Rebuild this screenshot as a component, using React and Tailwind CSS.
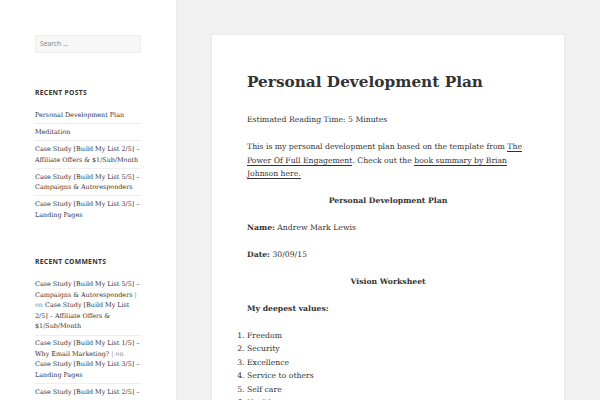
export default function App() {
  const serif = { fontFamily: '"DejaVu Serif", "Liberation Serif", serif' };
  const sans = { fontFamily: '"Noto Sans", "Open Sans", sans-serif' };

  const recentPosts = [
    "Personal Development Plan",
    "Meditation",
    "Case Study [Build My List 2/5] – Affiliate Offers & $1/Sub/Month",
    "Case Study [Build My List 5/5] – Campaigns & Autoresponders",
    "Case Study [Build My List 3/5] – Landing Pages",
  ];

  const comments = [
    {
      author: "Case Study [Build My List 5/5] – Campaigns & Autoresponders",
      post: "Case Study [Build My List 2/5] – Affiliate Offers & $1/Sub/Month",
    },
    {
      author: "Case Study [Build My List 1/5] – Why Email Marketing?",
      post: "Case Study [Build My List 3/5] – Landing Pages",
    },
    {
      author: "Case Study [Build My List 2/5] – Affiliate Offers & $1/Sub/Month",
      post: "Personal Development Plan",
    },
  ];

  const values = ["Freedom", "Security", "Excellence", "Service to others", "Self care", "Health"];

  return (
    <div className="flex h-[400px] overflow-hidden bg-[#f1f1f1] text-[#333333]" style={serif}>
      {/* sidebar */}
      <aside className="w-[176px] shrink-0 bg-white pl-[35px] pr-[32px] pt-[35px] shadow-[0_0_1px_rgba(0,0,0,0.15)]">
        <div className="mb-[35px] pr-[3px]">
          <div
            className="flex h-[18px] items-center border border-[#eeeeee] bg-[#f7f7f7] px-[4px] text-[6.7px] text-[#8a8a8a]"
            style={sans}
          >
            Search …
          </div>
        </div>

        <section className="mb-[34px]">
          <h2
            className="mb-[12px] text-[6.8px] font-bold uppercase leading-[10px] tracking-[0.04em]"
            style={sans}
          >
            Recent Posts
          </h2>
          <ul className="text-[6.4px] leading-[10.6px]">
            {recentPosts.map((p, i) => (
              <li
                key={p}
                className={
                  i === 0
                    ? "mr-[3px] pb-[2.7px] pt-[0px]"
                    : "mr-[3px] border-t border-[#eeeeee] pb-[2.7px] pt-[2.7px]"
                }
              >
                <span className="-mr-[3px]">{p}</span>
              </li>
            ))}
          </ul>
        </section>

        <section>
          <h2
            className="mb-[12px] text-[6.8px] font-bold uppercase leading-[10px] tracking-[0.04em]"
            style={sans}
          >
            Recent Comments
          </h2>
          <ul className="w-[106px] text-[6.4px] leading-[10.6px]">
            {comments.map((c, i) => (
              <li
                key={i}
                className={
                  i === 0
                    ? "pb-[2.7px] pt-[0px]"
                    : "border-t border-[#eeeeee] pb-[2.7px] pt-[2.7px]"
                }
              >
                <div className="w-[105px]">
                  {c.author} <span className="text-[#8a8a8a]">| on</span> {c.post}
                </div>
              </li>
            ))}
          </ul>
        </section>
      </aside>

      {/* content */}
      <main className="flex-1 px-[36px] pt-[35px]">
        <article className="h-full bg-white px-[35px] pt-[36px] shadow-[0_0_1px_rgba(0,0,0,0.15)]">
          <h1 className="mb-[20px] text-[15.3px] font-bold leading-[22px]">Personal Development Plan</h1>
          <div className="text-[7.7px] leading-[13.5px]">
            <p className="mb-[13.5px]">Estimated Reading Time: 5 Minutes</p>
            <p className="mb-[13px]">
              This is my personal development plan based on the template from{" "}
              <a className="border-b border-[#333333]">The Power Of Full Engagement</a>. Check out
              the <a className="border-b border-[#333333]">book summary by Brian Johnson here.</a>
            </p>
            <p className="mb-[13.5px] text-center font-bold">Personal Development Plan</p>
            <p className="mb-[13.5px]">
              <strong>Name:</strong> Andrew Mark Lewis
            </p>
            <p className="mb-[13.5px]">
              <strong>Date:</strong> 30/09/15
            </p>
            <p className="mb-[13.5px] text-center font-bold">Vision Worksheet</p>
            <p className="mb-[13.5px] font-bold">My deepest values:</p>
            <ol className="list-outside list-decimal">
              {values.map((v) => (
                <li key={v}>{v}</li>
              ))}
            </ol>
          </div>
        </article>
      </main>
    </div>
  );
}
